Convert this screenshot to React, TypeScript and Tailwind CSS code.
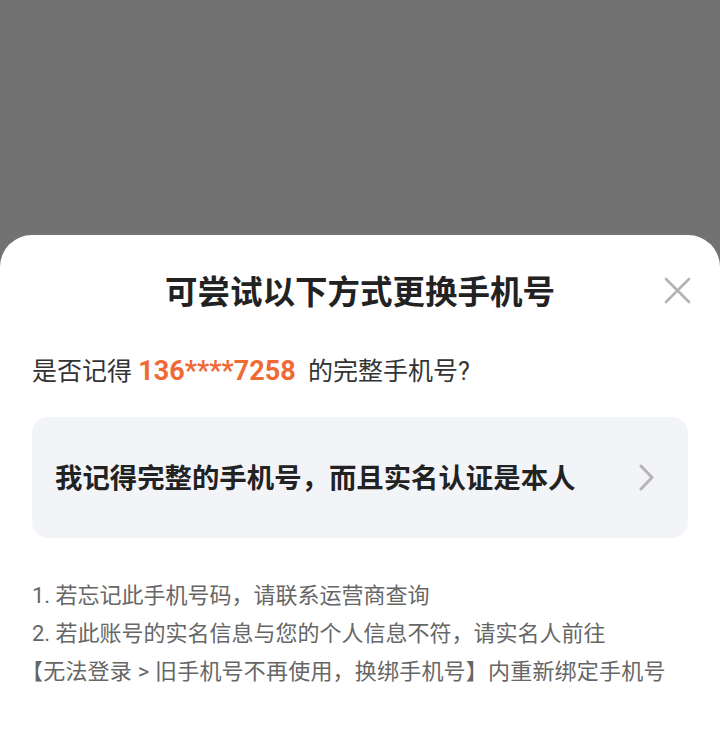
const font = { fontFamily: '"Roboto", "Noto Sans CJK SC", sans-serif' };

// --- Bottom sheet: change phone number options ---
export default function App() {
    return (
        <div className="flex h-[729px] w-[720px] flex-col bg-[#727272]" style={font}>
            <div className="h-[235px] shrink-0" />
            <div className="relative flex-1 rounded-t-[32px] bg-white px-[32px]">
                <button className="absolute right-[29px] top-[42px] text-[#b3b3b3]">
                    <svg width="27" height="27" viewBox="0 0 27 27" fill="none" stroke="currentColor" strokeWidth="2.6" strokeLinecap="round">
                        <path d="M2 2 L25 25 M25 2 L2 25" />
                    </svg>
                </button>

                <h1 className="pt-[36px] text-center text-[32.5px] font-bold leading-[44px] text-[#222]">
                    可尝试以下方式更换手机号
                </h1>

                <p className="mt-[38px] text-[25px] leading-[36px] text-[#333]">
                    是否记得 <span className="mr-[6px] text-[27px] font-bold text-[#f06a35]">136****7258</span> 的完整手机号?
                </p>

                <div className="mt-[27px] flex h-[121px] items-center justify-between rounded-[16px] bg-[#f3f4f8] pl-[23px] pr-[33px]">
                    <span className="pt-[5px] text-[27.4px] font-bold text-[#222]">我记得完整的手机号，而且实名认证是本人</span>
                    <svg width="16" height="27" viewBox="0 0 16 27" fill="none" stroke="#b5b5b5" strokeWidth="3" strokeLinecap="round" strokeLinejoin="round">
                        <path d="M2 2 L13 13.5 L2 25" />
                    </svg>
                </div>

                {/* Tips */}
                <div className="mt-[39px] text-[22px] leading-[38px] text-[#666]">
                    <p>1. 若忘记此手机号码，请联系运营商查询</p>
                    <p>2. 若此账号的实名信息与您的个人信息不符，请实名人前往</p>
                    <p className="-ml-[11px] tracking-[0.2px]">【无法登录 &gt; 旧手机号不再使用，换绑手机号】内重新绑定手机号</p>
                </div>
            </div>
        </div>
    );
}
